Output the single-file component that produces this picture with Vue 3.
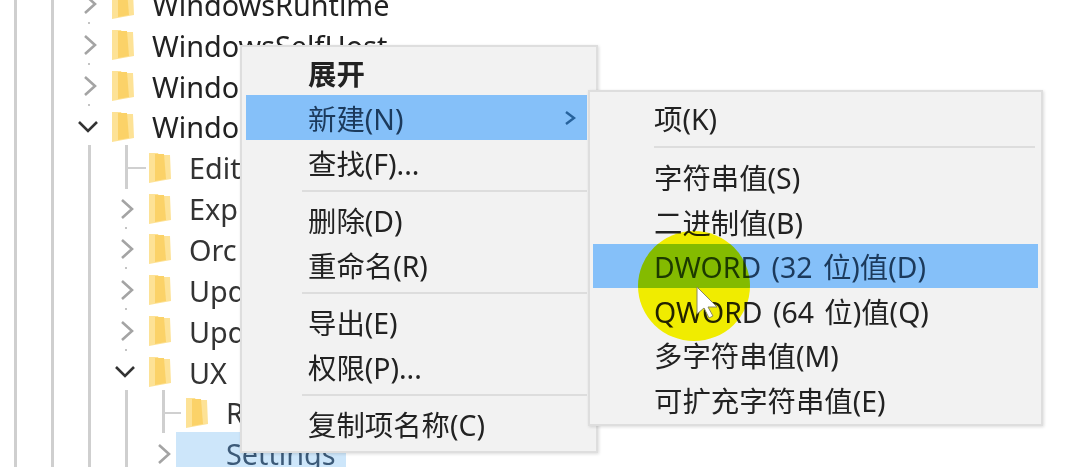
<script setup>
const rows = [
  { depth: 0, chev: 'right', label: 'WindowsRuntime' },
  { depth: 0, chev: 'right', label: 'WindowsSelfHost' },
  { depth: 0, chev: 'right', label: 'Windo' },
  { depth: 0, chev: 'down', label: 'Windo' },
  { depth: 1, chev: 'none', label: 'Edit' },
  { depth: 1, chev: 'right', label: 'Exp' },
  { depth: 1, chev: 'right', label: 'Orc' },
  { depth: 1, chev: 'right', label: 'Upd' },
  { depth: 1, chev: 'right', label: 'Upd' },
  { depth: 1, chev: 'down', label: 'UX' },
  { depth: 2, chev: 'none', label: 'R' },
  { depth: 2, chev: 'right', label: 'Settings', selected: true }
]
const mainGroups = [
  [{ t: '展开', bold: true }, { t: '新建(N)', active: true, arrow: true }, { t: '查找(F)...' }],
  [{ t: '删除(D)' }, { t: '重命名(R)' }],
  [{ t: '导出(E)' }, { t: '权限(P)...' }],
  [{ t: '复制项名称(C)' }]
]
const subGroups = [
  [{ t: '项(K)' }],
  [
    { t: '字符串值(S)' },
    { t: '二进制值(B)' },
    { t: 'DWORD (32 位)值(D)', active: true },
    { t: 'QWORD (64 位)值(Q)' },
    { t: '多字符串值(M)' },
    { t: '可扩充字符串值(E)' }
  ]
]
</script>

<template>
  <div class="stage">
    <div class="tree">
      <div v-for="(r, i) in rows" :key="i" class="row" :class="['d' + r.depth]">
        <span class="chev">
          <svg v-if="r.chev === 'right'" width="20" height="24" viewBox="0 0 20 24"><path d="M5 3l10 9-10 9" fill="none" stroke="#a4a4a4" stroke-width="2.6"/></svg>
          <svg v-else-if="r.chev === 'down'" class="down" width="22" height="16" viewBox="0 0 22 16"><path d="M2 3l9 9 9-9" fill="none" stroke="#333" stroke-width="2.6"/></svg>
          <i v-if="r.chev === 'right'" class="dot"></i>
        </span>
        <svg class="folder" width="24" height="32" viewBox="0 0 24 32">
          <path d="M1 1h9l1 2h11l1 24-22 4z" fill="#fde296"/>
          <path d="M7 2h9l2 25-11 2z" fill="#fbd268"/>
        </svg>
        <span class="label" :class="{ sel: r.selected }">{{ r.label }}</span>
      </div>
    </div>

    <i class="vline g1"></i>
    <i class="vline g2"></i>
    <i class="vline g3"></i>
    <i class="vline g4"></i>
    <i class="vline c1"></i>
    <i class="vline c2"></i>
    <i class="hline h1"></i>
    <i class="hline h2"></i>

    <div class="menu main">
      <template v-for="(g, gi) in mainGroups" :key="gi">
        <div v-if="gi" class="sep"></div>
        <div v-for="it in g" :key="it.t" class="item" :class="{ active: it.active, bold: it.bold }">
          <span>{{ it.t }}</span>
          <svg v-if="it.arrow" class="arrow" width="16" height="18" viewBox="0 0 16 18"><path d="M4 3l8 6-8 6" fill="none" stroke="#27629c" stroke-width="2.4"/></svg>
        </div>
      </template>
    </div>

    <div class="menu sub">
      <template v-for="(g, gi) in subGroups" :key="gi">
        <div v-if="gi" class="sep"></div>
        <div v-for="it in g" :key="it.t" class="item" :class="{ active: it.active }">
          <span>{{ it.t }}</span>
        </div>
      </template>
    </div>

    <div class="spot"></div>
    <svg class="cursor" width="24" height="36" viewBox="0 0 24 36">
      <path d="M2 1v27l7-6 5 10 4-2-5-9h9z" fill="#fff" stroke="#8a8a60" stroke-width="1"/>
    </svg>
  </div>
</template>

<style>
html, body { margin: 0; background: #fff; overflow: hidden; }
</style>

<style scoped>
.stage {
  position: relative;
  width: 1073px;
  height: 467px;
  overflow: hidden;
  background: #fff;
  filter: blur(0.7px);
  font-family: "Noto Sans", "Noto Sans CJK SC", sans-serif;
  color: #222;
}
.tree { margin-top: -16px; }
.row {
  display: flex;
  align-items: center;
  height: 40.85px;
  font-size: 28.8px;
  white-space: nowrap;
}
.d1, .d2 { color: #333; }
.d0 { padding-left: 78px; }
.d1 { padding-left: 115px; }
.d2 { padding-left: 152px; }
.chev {
  position: relative;
  width: 22px;
  flex: none;
  display: flex;
  align-items: center;
  justify-content: flex-start;
}
.chev > svg { margin-left: 2px; }
.chev > svg.down { margin-left: -1px; }
.dot {
  position: absolute;
  left: 10px;
  top: 30px;
  width: 2px;
  height: 2px;
  background: #c4c4c4;
}
.folder { flex: none; margin-left: 11px; margin-right: 17px; }
.label.sel {
  background: #cde6fa;
  color: #3c5a78;
  margin-left: -50px;
  padding: 2px 10px 2px 50px;
}
.vline { position: absolute; width: 3px; background: #cfcfcf; }
.hline { position: absolute; height: 2px; background: #d0d0d0; }
.g1 { left: 14px; top: 0; bottom: 0; }
.g2 { left: 51px; top: 0; bottom: 0; }
.g3 { left: 88px; top: 145px; bottom: 0; }
.g4 { left: 125px; top: 390px; bottom: 0; }
.c1 { left: 125px; top: 145px; height: 44px; }
.c2 { left: 162px; top: 390px; height: 43px; }
.h1 { left: 126px; top: 167px; width: 20px; }
.h2 { left: 163px; top: 412px; width: 18px; }

.menu {
  position: absolute;
  box-sizing: border-box;
  background: #f2f2f2;
  border: 2px solid #dedede;
  box-shadow: 1px 1px 3px rgba(0, 0, 0, 0.14);
  font-family: "Noto Sans", "Noto Sans CJK SC", sans-serif;
  font-size: 28.4px;
  color: #222;
}
.main { left: 240px; top: 45px; width: 358px; height: 408px; padding: 3px 9px 3px 4px; }
.sub { left: 588px; top: 90px; width: 455px; height: 336px; padding: 3px; word-spacing: 3px; }
.item {
  display: flex;
  align-items: center;
  justify-content: space-between;
  white-space: nowrap;
}
.main .item { height: 45.2px; padding: 0 9px 0 62px; }
.sub .item { height: 44.5px; padding-left: 61px; }
.item.bold { font-weight: 700; }
.item.active { background: #85c0f9; color: #1c3a5c; }
.sep { height: 2px; background: #dddddd; margin: 4.8px 0 4.8px 56px; }
.sub .sep { margin: 6px 3px 7px 61px; }
.arrow { flex: none; }
.spot {
  position: absolute;
  left: 638px;
  top: 231px;
  width: 112px;
  height: 110px;
  border-radius: 50%;
  background: #fdf900;
  mix-blend-mode: multiply;
}
.cursor { position: absolute; left: 695px; top: 286px; }
</style>
